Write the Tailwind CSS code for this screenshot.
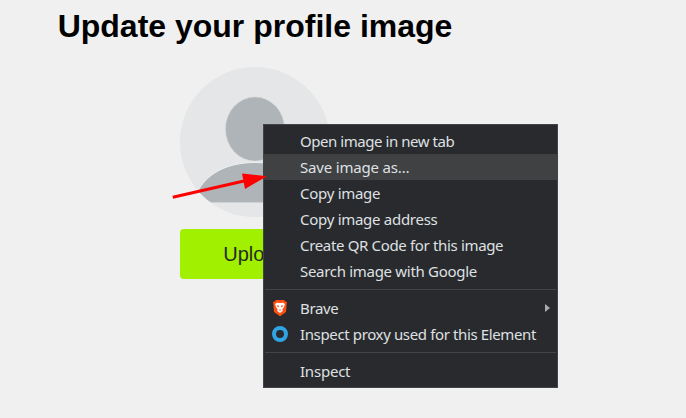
<!DOCTYPE html>
<html lang="en">
<head>
<meta charset="utf-8">
<title>Update your profile image</title>
<script src="https://cdn.jsdelivr.net/npm/@tailwindcss/browser@4"></script>
</head>
<body class="relative h-[418px] w-[686px] overflow-hidden bg-[#f0f0f0] font-['Liberation_Sans',Arial,sans-serif]">
<main class="flex w-[510px] flex-col items-center pt-[7px]">
  <h1 class="text-[32px] leading-[38px] font-bold text-black">Update your profile image</h1>
  <svg class="mt-[22px] block" width="150" height="150" viewBox="0 0 150 150">
    <defs><clipPath id="c"><circle cx="75" cy="75" r="75"/></clipPath></defs>
    <g clip-path="url(#c)">
      <rect width="150" height="150" fill="#e4e6e7"/>
      <path d="M13 136C20 110 43 95.500 75 95.500S130 110 137 136Z" fill="#aeb4b7" stroke="#eef0f0"/>
      <rect y="136" width="150" height="14" fill="#e4e6e7"/>
      <ellipse cx="75" cy="62" rx="29.500" ry="32" fill="#aeb4b7" stroke="#d4d8da" stroke-width=".5"/>
    </g>
  </svg>
  <button class="mt-3 h-[50px] w-[150px] rounded-[4px] bg-[#a0f000] text-[20px] text-[#252b25]">Upload</button>
</main>
<nav class="absolute top-[124px] left-[263px] w-[295px] border border-[#424447] bg-[#292a2d] py-[3px] font-['Noto_Sans',sans-serif] text-[15px] leading-[26px] whitespace-nowrap text-[#dfe0e3]">
  <div class="h-[26px] pl-9"><span class="tracking-[-0.45px]">Open image in new tab</span></div>
  <div class="h-[26px] bg-[#404143] pl-9"><span class="tracking-[-0.18px]">Save image as…</span></div>
  <div class="h-[26px] pl-9"><span class="tracking-[-0.28px]">Copy image</span></div>
  <div class="h-[26px] pl-9"><span class="tracking-[-0.28px]">Copy image address</span></div>
  <div class="h-[26px] pl-9"><span class="tracking-[-0.34px]">Create QR Code for this image</span></div>
  <div class="h-[26px] pl-9"><span class="tracking-[-0.3px]">Search image with Google</span></div>
  <div class="flex h-[11px] items-center px-px"><div class="h-px w-full bg-[#424447]"></div></div>
  <div class="flex h-[26px] items-center pr-[7px] pl-2">
    <svg class="mr-3 shrink-0" width="16" height="18" viewBox="0 0 16 18"><path d="M4 1h8l1.500 1.500 1.500.5-.3 2-.7 8L8 17.200 2 13 1.300 5 1 3l1.500-.5Z" fill="#fb5011"/><path d="m3 5 2-1.300 3 .4 3-.4L13 5l-1 3-1.500 2 .2 2L8 14l-2.700-2 .2-2L4 8Z" fill="#fff"/><path d="m4.700 6.200 2.300.6-.3 1.700-1.400-1Zm6.600 0-2.300.6.300 1.700 1.400-1ZM6.900 11 8 10.300l1.100.7L8 11.800Z" fill="#fb5011"/></svg>
    <span class="tracking-[-0.35px]">Brave</span>
    <svg class="ml-auto" width="5" height="8" viewBox="0 0 5 8"><path d="M0 0 5 4 0 8Z" fill="#a9aaad"/></svg>
  </div>
  <div class="flex h-[26px] items-center pl-2">
    <svg class="mr-3 shrink-0" width="16" height="16" viewBox="0 0 16 16"><circle cx="8" cy="8" r="6" fill="none" stroke="#30a5e5" stroke-width="4"/></svg>
    <span class="tracking-[-0.37px]">Inspect proxy used for this Element</span>
  </div>
  <div class="flex h-[11px] items-center px-px"><div class="h-px w-full bg-[#424447]"></div></div>
  <div class="h-[26px] pl-9"><span class="tracking-[-0.22px]">Inspect</span></div>
</nav>
<svg class="absolute top-[168px] left-[168px]" width="104" height="36" viewBox="168 168 104 36"><path d="M172.800 197.300 244 181" stroke="#f00" stroke-width="3"/><path d="m242 173.500 25 2.700-22 12.800Z" fill="#f00"/></svg>
</body>
</html>
